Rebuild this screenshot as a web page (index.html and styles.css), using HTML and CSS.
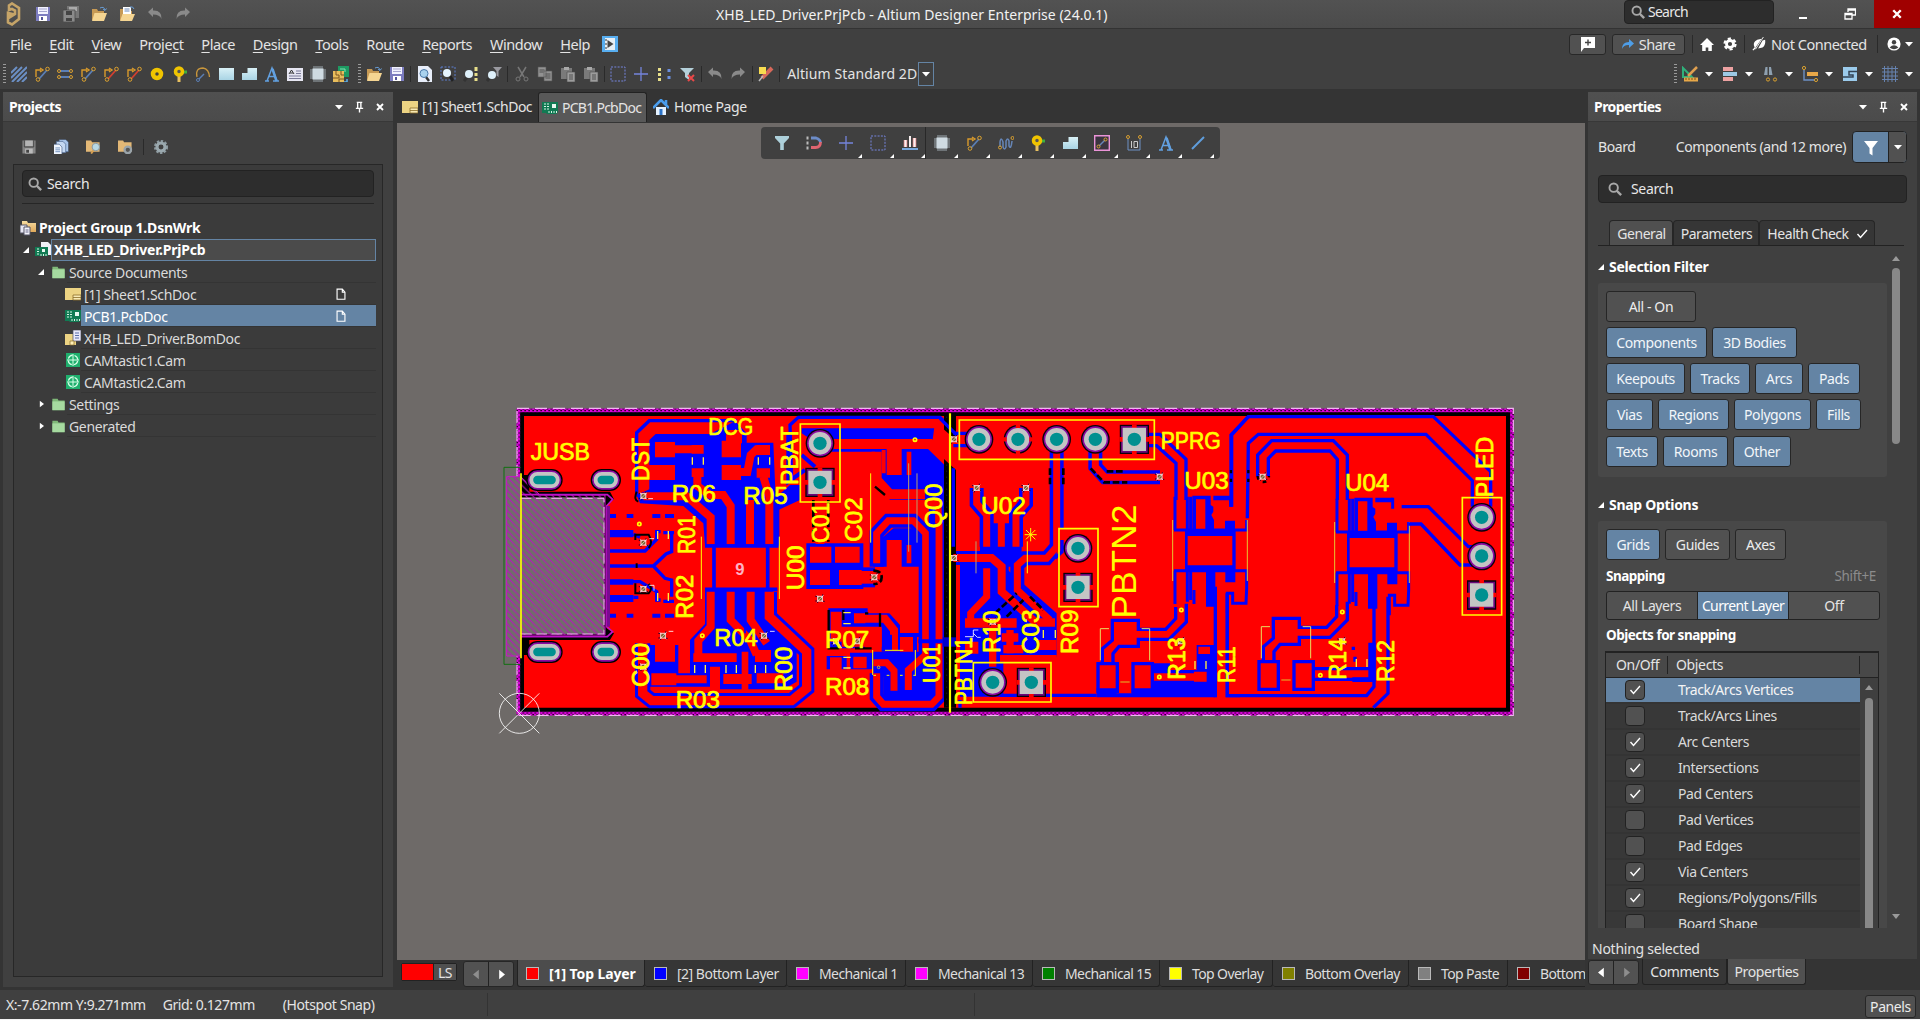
FILE: index.html
```html
<!DOCTYPE html>
<html lang="en">
<head>
<meta charset="utf-8">
<title>XHB_LED_Driver.PrjPcb - Altium Designer Enterprise (24.0.1)</title>
<link rel="stylesheet" href="styles.css">
</head>
<body>
<svg class="sprite" width="0" height="0">
<defs>
<pattern id="hatch" width="20" height="20" patternUnits="userSpaceOnUse"><path d="M-5-5L25 25M-5 15L5 25M15-5L25 5" stroke="#b416b8" stroke-width="3.5"/></pattern>
<pattern id="edge" width="12" height="12" patternUnits="userSpaceOnUse"><rect width="12" height="12" fill="#d800d8"/><path d="M1 3h6M7 8h5" stroke="#2a002a" stroke-width="3.500"/></pattern>
<linearGradient id="lb" x2="0" y2="1"><stop stop-color="#d8f0f6"/><stop offset="1" stop-color="#a9d4e4"/></linearGradient>
<linearGradient id="fo" x2="0" y2="1"><stop stop-color="#f6dca0"/><stop offset="1" stop-color="#e0a95a"/></linearGradient>
</defs>
<symbol id="i-logo" viewBox="0 0 18 24"><path d="M4 8V3.500L7 1.500L14 6v11l-7 5.500l-4-2v-4l7-4.500V8.500L7 7z M7 12l-4 2v-3z" fill="none" stroke="#c5a468" stroke-width="2.600"/></symbol>
<symbol id="i-save" viewBox="0 0 16 16"><path d="M1 1h14v14H1z" fill="#7c7cc0"/><path d="M3 1h10v7H3z" fill="#f2f2ff"/><path d="M4 3h8M4 5.500h8" stroke="#a5a5d0"/><path d="M4 10h8v5H4z" fill="#fff"/><path d="M6 11h2v3H6z" fill="#55559a"/></symbol>
<symbol id="i-saveg" viewBox="0 0 16 16"><path d="M1 1h14v14H1z" fill="#858585"/><path d="M4 1h8v6H4z" fill="#b4b4b4"/><path d="M4 9.500h8V15H4z" fill="#bbb"/><path d="M5 11h3v3H5z" fill="#444"/><path d="M3 1v7h10V1" fill="none" stroke="#444"/></symbol>
<symbol id="i-saveall" viewBox="0 0 16 16"><path d="M4 0h12v12H4z" fill="#777"/><path d="M6 1h8v4H6z" fill="#aaa"/><path d="M0 4h12v12H0z" fill="#8a8a8a" stroke="#444" stroke-width=".7"/><path d="M3 5h6v4H3zM3 12h6v3H3z" fill="#444"/></symbol>
<symbol id="i-open" viewBox="0 0 16 16"><path d="M1 3h5l1 2h6v9H1z" fill="#c79a55"/><path d="M3.500 7H16l-3 8H1z" fill="#f5d592"/><path d="M9 2q4-2 5 2m-2-1l2 1.500l1.500-2" fill="none" stroke="#6a9fd8"/></symbol>
<symbol id="i-openp" viewBox="0 0 16 16"><path d="M1 3h5l1 2h6v9H1z" fill="#c79a55"/><path d="M4 1h8v9H4z" fill="#fff"/><path d="M5.500 3h5M5.500 5h5" stroke="#6d8bbd"/><path d="M3.500 8H16l-3 7H1z" fill="#f5d592"/><path d="M11 1q3-1 4 2" fill="none" stroke="#6a9fd8"/></symbol>
<symbol id="i-undo" viewBox="0 0 16 16"><path d="M1 6l5-4.500V4.500q9-.5 8.500 8.500Q13 8.500 6 8.500V11z" fill="#8a8a8a"/></symbol>
<symbol id="i-redo" viewBox="0 0 16 16"><path d="M15 6l-5-4.500V4.500Q1 4 1.500 13Q3 8.500 10 8.500V11z" fill="#8a8a8a"/></symbol>
<symbol id="i-hatch" viewBox="0 0 16 16"><path d="M0 7L6 1M0 12L11 1M1 16L16 1M6 16L16 6M11 16l5-5" stroke="#6b8fc4" stroke-width="2"/></symbol>
<symbol id="i-route" viewBox="0 0 16 16"><path d="M2 11V4h5M6 2l3 2l-3 2" fill="none" stroke="#d99a2b" stroke-width="1.400"/><path d="M5 13l8-9" stroke="#5b7fb5" stroke-width="1.800"/><circle cx="4" cy="13.500" r="1.800" fill="none" stroke="#d9a030"/><circle cx="13.500" cy="3" r="1.800" fill="none" stroke="#d9a030"/></symbol>
<symbol id="i-router" viewBox="0 0 16 16"><path d="M2 11V4h5M6 2l3 2l-3 2" fill="none" stroke="#d99a2b" stroke-width="1.400"/><path d="M5 13l8-9" stroke="#d34030" stroke-width="1.800"/><circle cx="4" cy="13.500" r="1.800" fill="none" stroke="#d9a030"/><circle cx="13.500" cy="3" r="1.800" fill="none" stroke="#d9a030"/></symbol>
<symbol id="i-pair" viewBox="0 0 16 16"><path d="M3 5h10M3 11h10" stroke="#5b7fb5" stroke-width="2"/><g fill="none" stroke="#d9a030"><circle cx="2" cy="5" r="1.500"/><circle cx="14" cy="5" r="1.500"/><circle cx="2" cy="11" r="1.500"/><circle cx="14" cy="11" r="1.500"/></g></symbol>
<symbol id="i-pad" viewBox="0 0 16 16"><circle cx="8" cy="8" r="4" fill="none" stroke="#f0c400" stroke-width="4.500"/></symbol>
<symbol id="i-via" viewBox="0 0 16 16"><path d="M7 7v9" stroke="#e8c060" stroke-width="3"/><path d="M9 6h6" stroke="#3fae3f" stroke-width="3"/><circle cx="7" cy="5.500" r="3.500" fill="#555" stroke="#f0c400" stroke-width="3.500"/></symbol>
<symbol id="i-arc" viewBox="0 0 16 16"><path d="M2 11Q0 2 8 2q6 1 6.500 9" fill="none" stroke="#c8963c" stroke-width="1.300"/><path d="M4 13l5-5" stroke="#5b7fb5" stroke-width="1.500"/><circle cx="3" cy="14" r="1.500" fill="none" stroke="#5b7fb5"/></symbol>
<symbol id="i-rect" viewBox="0 0 16 16"><path d="M1 2h15v12H1z" fill="url(#lb)"/></symbol>
<symbol id="i-poly" viewBox="0 0 16 16"><path d="M6.500 2H16v12H1V7h5.500z" fill="url(#lb)"/></symbol>
<symbol id="i-A" viewBox="0 0 16 16"><path d="M1 15h4M9 15h6M3 15L8 2l5 13M5 10.500h6" fill="none" stroke="#62a0e0" stroke-width="1.500"/><path d="M8.500 3l4 12" stroke="#62a0e0" stroke-width="2.500"/></symbol>
<symbol id="i-note" viewBox="0 0 16 16"><path d="M0 2h16v13H0z" fill="#e6e6f2"/><path d="M9 5h5M9 7.500h5M2 10h12M2 12.500h12" stroke="#7a7a98"/><path d="M2 8l2.500-4L7 8M3 7h3" fill="none" stroke="#333"/></symbol>
<symbol id="i-chip" viewBox="0 0 16 16"><path d="M4 0v16M6 0v16M8 0v16M10 0v16M12 0v16M0 4h16M0 6h16M0 8h16M0 10h16M0 12h16" stroke="#a8b4bc" stroke-width=".9"/><path d="M2.500 2.500h11v11h-11z" fill="#cfdbe2"/></symbol>
<symbol id="i-room" viewBox="0 0 16 16"><path d="M5 0h11v11H5z" fill="#1e9a62"/><path d="M7 3h5v3" stroke="#7fe0b0" fill="none"/><path d="M0 5h11v11H0z" fill="#e8bd5c"/><path d="M3 5v4h3v3H0M8 5v4h3M6 16v-3h5" fill="none" stroke="#7a5520"/><path d="M14 13v3h-3" fill="none" stroke="#5ab0ee" stroke-width="1.500"/></symbol>
<symbol id="i-zdoc" viewBox="0 0 16 16"><path d="M1 0h10l4 4v12H1z" fill="#e8eefa"/><path d="M12 15L9 11" stroke="#333" stroke-width="2.500"/><circle cx="7" cy="7.500" r="4" fill="#a9d2ee" stroke="#4a78a8"/></symbol>
<symbol id="i-zsel" viewBox="0 0 16 16"><path d="M1 1h14v13H1z" fill="none" stroke="#5c7fd0" stroke-dasharray="2 1.500"/><path d="M13 15L10 10" stroke="#222" stroke-width="3"/><circle cx="7" cy="7" r="4" fill="#e4f4ff"/></symbol>
<symbol id="i-zpts" viewBox="0 0 16 16"><path d="M1 15l4-5" stroke="#333" stroke-width="3"/><circle cx="6" cy="8" r="4" fill="#def0fa"/><path d="M13 1v4M13 7v3M13 12v3" stroke="#e8df8a" stroke-width="3"/></symbol>
<symbol id="i-zflt" viewBox="0 0 16 16"><path d="M1 15l4-5" stroke="#333" stroke-width="3"/><circle cx="6" cy="9" r="4" fill="#def0fa"/><path d="M7 1h9l-3.500 4v6l-2-1.500V5z" fill="#9a9aa0"/></symbol>
<symbol id="i-cut" viewBox="0 0 16 16"><path d="M4 1l6 10M12 1L6 11" stroke="#777" stroke-width="1.500"/><circle cx="4" cy="13" r="2" fill="none" stroke="#777"/><circle cx="12" cy="13" r="2" fill="none" stroke="#777"/></symbol>
<symbol id="i-copy" viewBox="0 0 16 16"><path d="M1 1h8v10H1zM7 5h8v10H7z" fill="#929292" stroke="#555" stroke-width=".6"/><path d="M8.500 8h5M8.500 10h5M8.500 12h5M2.500 4h5M2.500 6h4" stroke="#505050"/></symbol>
<symbol id="i-paste" viewBox="0 0 16 16"><path d="M1 2h11v11H1z" fill="#7a7a7a"/><path d="M4 1h5v3H4z" fill="#aaa"/><path d="M7 6h8v10H7z" fill="#9c9c9c" stroke="#4a4a4a" stroke-width=".6"/><path d="M9 9h4M9 11h4M9 13h4" stroke="#505050"/></symbol>
<symbol id="i-sel" viewBox="0 0 16 16"><path d="M1 1h14v14H1z" fill="none" stroke="#7484dc" stroke-dasharray="2 1.300"/></symbol>
<symbol id="i-move" viewBox="0 0 16 16"><path d="M8 1v14M1 8h14" stroke="#7484dc" stroke-width="1.300"/></symbol>
<symbol id="i-dots" viewBox="0 0 16 16"><path d="M3.500 2v3M3.500 7v3M3.500 12v3" stroke="#e8df8a" stroke-width="3"/><path d="M13 3v3M13 10v3" stroke="#6b8fe0" stroke-width="3"/></symbol>
<symbol id="i-fltx" viewBox="0 0 16 16"><path d="M1 2h14L10 7v7l-4-3V7z" fill="#b4d0da"/><path d="M9 9l6 6M15 9l-6 6" stroke="#e84848" stroke-width="2"/></symbol>
<symbol id="i-wand" viewBox="0 0 16 16"><path d="M4 12L14 2" stroke="#d8685a" stroke-width="4"/><path d="M1 1h7v7H1z" fill="#f8dc50"/><path d="M1 15l4-5" stroke="#bbb" stroke-width="1.500"/></symbol>
<symbol id="i-flt" viewBox="0 0 16 16"><path d="M1 1h14v2L9.800 8.500V15H6.200V8.500L1 3z" fill="#add0da"/></symbol>
<symbol id="i-fltw" viewBox="0 0 16 16"><path d="M1 1h14L9.500 8v7.500l-3-2V8z" fill="#fff"/></symbol>
<symbol id="i-mag" viewBox="0 0 16 16"><path d="M5 3h5q4.500 1.500 4.500 5" fill="none" stroke="#6c8cc8" stroke-width="2.800"/><path d="M14.500 7q0 5.500-5 5.500H5" fill="none" stroke="#de6470" stroke-width="2.800"/><path d="M1.500 1.500v3M1.500 6.500v3M1.500 11.500v3" stroke="#bbb" stroke-width="2"/></symbol>
<symbol id="i-bars" viewBox="0 0 16 16"><path d="M3.500 12V5M12.500 12V3" stroke="#f08c8c" stroke-width="3.500"/><path d="M3.500 12V5M12.500 12V3M8 12V1" stroke="#f8f0f0" stroke-width="2"/><path d="M0 14h16" stroke="#77a7dd" stroke-width="2"/></symbol>
<symbol id="i-wave" viewBox="0 0 16 16"><path d="M2 12V7q1-6 3 0v5q1.500 4 3 0V6q2-4 3 0v5q2 4 3-5" fill="none" stroke="#6686b8" stroke-width="1.500"/><circle cx="2" cy="12.500" r="1.500" fill="none" stroke="#d9a030"/><circle cx="14.500" cy="3" r="1.500" fill="none" stroke="#d9a030"/></symbol>
<symbol id="i-ko" viewBox="0 0 16 16"><path d="M.7.7h14.600v14.600H.7z" fill="#3a3440" stroke="#eb94d8" stroke-width="1.400"/><path d="M5 11l6-6" stroke="#6686b8" stroke-width="1.500"/><circle cx="4.500" cy="11.500" r="1.500" fill="none" stroke="#d9a030"/><circle cx="11.500" cy="4.500" r="1.500" fill="none" stroke="#d9a030"/></symbol>
<symbol id="i-dim" viewBox="0 0 16 16"><path d="M2 4v11h12V4" fill="none" stroke="#6c90c4"/><path d="M5.500 6v7M8 6.500h3.500v6H8z" fill="none" stroke="#ccc"/><circle cx="2" cy="2" r="1.500" fill="none" stroke="#d9a030"/><circle cx="14" cy="2" r="1.500" fill="none" stroke="#d9a030"/></symbol>
<symbol id="i-line" viewBox="0 0 16 16"><path d="M2 14L14 2" stroke="#5f9ddc" stroke-width="2"/></symbol>
<symbol id="i-draw" viewBox="0 0 16 16"><path d="M1 2v9h9z" fill="none" stroke="#2fb07a" stroke-width="2"/><path d="M6 10l9-9" stroke="#e0a050" stroke-width="2.500"/><path d="M2 11.500h14v4H2z" fill="#e8a848"/><path d="M4 12v2M7 12v2M10 12v2M13 12v2" stroke="#7c5518"/></symbol>
<symbol id="i-align" viewBox="0 0 16 16"><path d="M1 1h10v4H1zM1 11h10v4H1z" fill="#eda2a2"/><path d="M1 6h14v4H1z" fill="#9cc8e4"/></symbol>
<symbol id="i-find" viewBox="0 0 16 16"><path d="M2 9l1.500-8h2V9zM7 9V1h2l1.500 8z" fill="#8ea0b0"/><circle cx="6" cy="13.500" r="1.600" fill="none" stroke="#d9a030"/><circle cx="13" cy="13.500" r="1.600" fill="none" stroke="#d9a030"/></symbol>
<symbol id="i-dims" viewBox="0 0 16 16"><path d="M2 4v10h11" fill="none" stroke="#6c90c4" stroke-width="1.400"/><path d="M5 6h11v4H5z" fill="#e8a848"/><circle cx="2" cy="2" r="1.600" fill="none" stroke="#d9a030"/><circle cx="14" cy="14" r="1.600" fill="none" stroke="#d9a030"/></symbol>
<symbol id="i-sheet" viewBox="0 0 16 16"><path d="M1 1h14v14H1z" fill="#9bcbec"/><path d="M15 5.500H7V9h4v2H1" fill="none" stroke="#345" stroke-width="1.500"/></symbol>
<symbol id="i-grid" viewBox="0 0 16 16"><path d="M2.500 0v16M6 0v16M10 0v16M13.500 0v16M0 2.500h16M0 6h16M0 10h16M0 13.500h16" stroke="#6682ae"/></symbol>
<symbol id="i-doc" viewBox="0 0 16 16"><path d="M0 2h16v12H0z" fill="#ecd383"/><path d="M8 9h8v5H8z" fill="#f9eab4" stroke="#8a6d28" stroke-width=".8"/><path d="M8 11.500h8" stroke="#8a6d28" stroke-width=".8"/></symbol>
<symbol id="i-pcb" viewBox="0 0 16 16"><path d="M0 2h16v10l-2 2H5l-1-1H0z" fill="#117a53"/><path d="M2 4h2M2 6.500h2M2 9h2M5 4h2M5 6.500h2M5 9h2M7 13v-2M9.500 13v-2M12 13v-2M14.500 13v-2" stroke="#d7f5e6"/><path d="M10 4h4v4h-4z" fill="#e8f8f0"/></symbol>
<symbol id="i-prj" viewBox="0 0 16 16"><path d="M6 0h7l3 3v10H6z" fill="#f0f0f6"/><path d="M0 5h13v9H0z" fill="#117a53"/><path d="M2 7h2M2 9.500h2M2 12h2M6 12v2M8.500 12v2M11 12v2" stroke="#d7f5e6"/><path d="M7 7h3v3H7z" fill="#e8f8f0"/></symbol>
<symbol id="i-grp" viewBox="0 0 16 16"><path d="M2 1h5l1 2h8v9H2z" fill="url(#fo)"/><path d="M0 5h7v8H0z" fill="#e8e8f4" stroke="#556"/><path d="M4 7h6v8H4z" fill="#f4f4fc" stroke="#556"/><path d="M5.500 10h3M5.500 12h3" stroke="#668"/></symbol>
<symbol id="i-bom" viewBox="0 0 16 16"><path d="M0 4h11v11H0z" fill="#ecd383"/><path d="M8 0h8v11H8z" fill="#e8e8fa" stroke="#556" stroke-width=".7"/><path d="M10 3h4M10 5.500h4M10 8h4" stroke="#5a6da8"/><path d="M5 11h4v4H5z" fill="#fff0b8" stroke="#8a6d28" stroke-width=".7"/></symbol>
<symbol id="i-cam" viewBox="0 0 16 16"><path d="M1 1h14v14H1z" fill="#1faf6d"/><circle cx="8" cy="8" r="4.800" fill="none" stroke="#d8ffe8" stroke-width="1.200" stroke-dasharray="5.500 2.040" stroke-dashoffset="-1"/><path d="M8 2v12M2 8h12" stroke="#d8ffe8"/></symbol>
<symbol id="i-fold" viewBox="0 0 16 16"><path d="M1 2h6l1 2h7v11H1z" fill="#7fb878"/><path d="M1 5h14v10H1z" fill="#a6daa0"/></symbol>
<symbol id="i-file" viewBox="0 0 16 16"><path d="M3.500 2.500h6l3 3.500v8h-9zM9.500 2.500V6h3" fill="none" stroke="#fff" stroke-width="1.300"/></symbol>
<symbol id="i-fsearch" viewBox="0 0 16 16"><path d="M0 1h6l1 2h8v10H0z" fill="#e3b876"/><path d="M6 15l3-4" stroke="#d8a050" stroke-width="2"/><circle cx="11" cy="8" r="4" fill="#b8d8e4" stroke="#8796a0"/></symbol>
<symbol id="i-fgear" viewBox="0 0 16 16"><path d="M0 1h6l1 2h8v10H0z" fill="#e3b876"/><circle cx="11" cy="11" r="3.500" fill="#555" stroke="#9aa4aa" stroke-width="2.400"/></symbol>
<symbol id="i-docs" viewBox="0 0 16 16"><path d="M6 0h7l3 3v10H6z" fill="#a8c4e8" stroke="#46608a" stroke-width=".7"/><path d="M3 2h7l3 3v9H3z" fill="#c4d8f2" stroke="#46608a" stroke-width=".7"/><path d="M0 5h6l3 3v8H0z" fill="#f0f6ff" stroke="#46608a" stroke-width=".7"/><path d="M2 9h5M2 11h5M2 13h5" stroke="#6f8fbd"/></symbol>
<symbol id="i-gear" viewBox="0 0 16 16"><circle cx="8" cy="8" r="6.300" fill="none" stroke="#8d9aa0" stroke-width="2.500" stroke-dasharray="2.500 1.600"/><circle cx="8" cy="8" r="4.300" fill="none" stroke="#9aa8ae" stroke-width="3.300"/></symbol>
<symbol id="i-gearw" viewBox="0 0 16 16"><circle cx="8" cy="8" r="6.300" fill="none" stroke="#fff" stroke-width="2.500" stroke-dasharray="3.600 3"/><circle cx="8" cy="8" r="4" fill="none" stroke="#fff" stroke-width="3.200"/></symbol>
<symbol id="i-search" viewBox="0 0 16 16"><circle cx="6.500" cy="6.500" r="4.800" fill="none" stroke="#a8a8a8" stroke-width="2.200"/><path d="M10 10l5 5" stroke="#a8a8a8" stroke-width="2.800"/></symbol>
<symbol id="i-home" viewBox="0 0 16 16"><path d="M3 8v8h10V8z" fill="#e6f2ff"/><path d="M0 9l8-8l8 8M13 1v5" fill="none" stroke="#4a9cec" stroke-width="2.600"/><path d="M6.500 10h3v6h-3z" fill="#2c74c8"/></symbol>
<symbol id="i-homew" viewBox="0 0 16 16"><path d="M8 1l8 8h-2.500v7h-4v-4h-3v4h-4V9H0z" fill="#fff"/></symbol>
<symbol id="i-dn" viewBox="0 0 8 8"><path d="M0 2h8L4 6.500z" fill="#fff"/></symbol>
<symbol id="i-pin" viewBox="0 0 12 12"><path d="M3 1h6M4 1v6M7.500 1v6M2 7.500h8M6 7.500V12" stroke="#fff" stroke-width="1.500" fill="none"/></symbol>
<symbol id="i-x" viewBox="0 0 8 8"><path d="M1 1l6 6M7 1L1 7" stroke="#fff" stroke-width="1.900"/></symbol>
<symbol id="i-user" viewBox="0 0 16 16"><circle cx="8" cy="8" r="7.500" fill="#fff"/><circle cx="8" cy="6" r="2.500" fill="#404040"/><path d="M3 12q5-5 10 0q-5 4-10 0" fill="#404040"/></symbol>
<symbol id="i-plug" viewBox="0 0 16 16"><path d="M1 15l3-3" stroke="#fff" stroke-width="1.500"/><path d="M3 12Q0 6 6 3l5-1l-7 10zM12 4l3-1q1 6-3 9l-5 1z" fill="#fff"/><path d="M13 0L4 14" stroke="#fff" stroke-width="1"/></symbol>
<symbol id="i-play" viewBox="0 0 16 16"><path d="M0 0h16v16H0z" fill="#58aef0"/><path d="M3 2h10v12H3z" fill="#e6eef4"/><path d="M5.500 4l6 4l-6 4z" fill="#444"/><path d="M3 4h2M3 8h2M3 12h2" stroke="#333"/></symbol>
<symbol id="i-cmt" viewBox="0 0 16 16"><path d="M1 1h14v11H4l-3 4z" fill="#fff"/><path d="M8 3.500v6M5 6.500h6" stroke="#444" stroke-width="1.400"/></symbol>
<symbol id="i-share" viewBox="0 0 12 12"><path d="M7 1l5 4.500L7 10V7Q2 6.500 0 11Q0 4 7 4z" fill="#4e9ee8"/></symbol>
<symbol id="i-chk" viewBox="0 0 12 12"><path d="M1.500 6l3 3.500L11 2" fill="none" stroke="#fff" stroke-width="1.400"/></symbol>
<symbol id="i-exp" viewBox="0 0 6 6"><path d="M6 0v6H0z" fill="#fff"/></symbol>
<symbol id="i-col" viewBox="0 0 6 8"><path d="M1 0l5 4l-5 4z" fill="#fff"/></symbol>

<symbol id="p-via" viewBox="0 0 30 30"><path d="M1 8h6M1 22h6M23 2v5M24 23h5M8 28v-4" stroke="#200030" stroke-width="3"/><path d="M6 6h18v18H6z" fill="#f0b8b8"/><circle cx="15" cy="15" r="6" fill="#75602c"/><path d="M5 25L26 5M5 5l4 4M21 21l4 4" stroke="#f4f4f4" stroke-width="2"/></symbol>
<symbol id="p-rnd" viewBox="0 0 90 90"><circle cx="45" cy="45" r="43" fill="#0a000a"/><circle cx="45" cy="45" r="39" fill="#8a0aa0"/><circle cx="45" cy="45" r="34" fill="#c4c4c4"/><circle cx="45" cy="45" r="20" fill="#009090"/></symbol>
<symbol id="p-sq" viewBox="0 0 90 90"><path d="M1 1h88v88H1z" fill="#0a000a"/><path d="M5 5h80v80H5z" fill="#6a0878"/><path d="M0 38h90v14H0zM38 0h14v90H38z" fill="#f00"/><path d="M10 10h70v70H10z" fill="#c4c4c4"/><circle cx="45" cy="45" r="20" fill="#009090"/></symbol>
</svg>

<div class="app">
 <header class="title">
  <div class="quick"><svg class="logo"><use href="#i-logo"/></svg><svg><use href="#i-save"/></svg><svg><use href="#i-saveall"/></svg><svg><use href="#i-open"/></svg><svg><use href="#i-openp"/></svg><svg><use href="#i-undo"/></svg><svg><use href="#i-redo"/></svg></div>
  <div class="caption">XHB_LED_Driver.PrjPcb - Altium Designer Enterprise (24.0.1)</div>
  <div class="winctl"><div class="field tsearch"><svg><use href="#i-search"/></svg>Search</div><span class="min"></span><svg class="restore" viewBox="0 0 12 12"><path d="M4 4V1h7.500v6H8M4 2h7M1 5.500h7V11H1zM1 6.500h7" fill="none" stroke="#fff" stroke-width="1.300"/></svg><div class="close"><svg><use href="#i-x"/></svg></div></div>
 </header>
 <nav class="menu">
  <div class="items"><span><u>F</u>ile</span><span><u>E</u>dit</span><span><u>V</u>iew</span><span>Proje<u>c</u>t</span><span><u>P</u>lace</span><span><u>D</u>esign</span><span><u>T</u>ools</span><span>Ro<u>u</u>te</span><span><u>R</u>eports</span><span><u>W</u>indow</span><span><u>H</u>elp</span></div>
  <svg class="play"><use href="#i-play"/></svg>
  <div class="acct"><div class="btn cmt"><svg><use href="#i-cmt"/></svg></div><div class="btn share"><svg><use href="#i-share"/></svg>Share</div><i class="sep"></i><svg><use href="#i-homew"/></svg><svg><use href="#i-gearw"/></svg><i class="sep"></i><svg><use href="#i-plug"/></svg><span class="nc">Not Connected</span><i class="sep"></i><svg class="user"><use href="#i-user"/></svg><svg class="dn"><use href="#i-dn"/></svg></div>
 </nav>
 <div class="tools">
  <i class="grip"></i>
  <svg><use href="#i-hatch"/></svg><svg><use href="#i-route"/></svg><svg><use href="#i-pair"/></svg><svg><use href="#i-route"/></svg><svg><use href="#i-router"/></svg><svg><use href="#i-router"/></svg><svg><use href="#i-pad"/></svg><svg><use href="#i-via"/></svg><svg><use href="#i-arc"/></svg><svg><use href="#i-rect"/></svg><svg><use href="#i-poly"/></svg><svg><use href="#i-A"/></svg><svg><use href="#i-note"/></svg><svg><use href="#i-chip"/></svg><svg><use href="#i-room"/></svg>
  <i class="grip g2"></i>
  <svg><use href="#i-open"/></svg><svg><use href="#i-save"/></svg><i class="sep"></i><svg><use href="#i-zdoc"/></svg><svg><use href="#i-zsel"/></svg><svg><use href="#i-zpts"/></svg><svg><use href="#i-zflt"/></svg><i class="sep"></i><svg><use href="#i-cut"/></svg><svg><use href="#i-copy"/></svg><svg><use href="#i-paste"/></svg><svg><use href="#i-paste"/></svg><i class="sep"></i><svg><use href="#i-sel"/></svg><svg><use href="#i-move"/></svg><svg><use href="#i-dots"/></svg><svg><use href="#i-fltx"/></svg><i class="sep"></i><svg><use href="#i-undo"/></svg><svg><use href="#i-redo"/></svg><i class="sep"></i><svg><use href="#i-wand"/></svg><i class="sep"></i>
  <span class="view">Altium Standard 2D</span><div class="drop"><svg class="dn"><use href="#i-dn"/></svg></div>
  <div class="rtools"><i class="grip"></i><div><svg><use href="#i-draw"/></svg><svg class="dn"><use href="#i-dn"/></svg></div><div><svg><use href="#i-align"/></svg><svg class="dn"><use href="#i-dn"/></svg></div><div><svg><use href="#i-find"/></svg><svg class="dn"><use href="#i-dn"/></svg></div><div><svg><use href="#i-dims"/></svg><svg class="dn"><use href="#i-dn"/></svg></div><div><svg><use href="#i-sheet"/></svg><svg class="dn"><use href="#i-dn"/></svg></div><div><svg><use href="#i-grid"/></svg><svg class="dn"><use href="#i-dn"/></svg></div></div>
 </div>
 <main class="work">
  <aside class="panel left">
   <div class="phead"><b>Projects</b><svg><use href="#i-dn"/></svg><svg class="pin"><use href="#i-pin"/></svg><svg><use href="#i-x"/></svg></div>
   <div class="ptools"><svg><use href="#i-saveg"/></svg><svg><use href="#i-docs"/></svg><svg><use href="#i-fsearch"/></svg><svg><use href="#i-fgear"/></svg><i class="sep"></i><svg><use href="#i-gear"/></svg></div>
   <div class="tree">
    <div class="field"><svg><use href="#i-search"/></svg>Search</div>
    <hr>
    <div class="row l0"><svg><use href="#i-grp"/></svg><b>Project Group 1.DsnWrk</b></div>
    <div class="row l1"><svg class="ar"><use href="#i-exp"/></svg><svg><use href="#i-prj"/></svg><b class="cur">XHB_LED_Driver.PrjPcb</b></div>
    <div class="row l2"><svg class="ar"><use href="#i-exp"/></svg><svg class="f"><use href="#i-fold"/></svg><span>Source Documents</span></div>
    <div class="row l3"><svg><use href="#i-doc"/></svg><span>[1] Sheet1.SchDoc</span><svg class="fl"><use href="#i-file"/></svg></div>
    <div class="row l3 on"><svg><use href="#i-pcb"/></svg><span>PCB1.PcbDoc</span><svg class="fl"><use href="#i-file"/></svg></div>
    <div class="row l3"><svg><use href="#i-bom"/></svg><span>XHB_LED_Driver.BomDoc</span></div>
    <div class="row l3"><svg><use href="#i-cam"/></svg><span>CAMtastic1.Cam</span></div>
    <div class="row l3"><svg><use href="#i-cam"/></svg><span>CAMtastic2.Cam</span></div>
    <div class="row l2"><svg class="ar c"><use href="#i-col"/></svg><svg class="f"><use href="#i-fold"/></svg><span>Settings</span></div>
    <div class="row l2"><svg class="ar c"><use href="#i-col"/></svg><svg class="f"><use href="#i-fold"/></svg><span>Generated</span></div>
   </div>
  </aside>
  <section class="center">
   <div class="dtabs"><div class="t1"><svg><use href="#i-doc"/></svg>[1] Sheet1.SchDoc</div><div class="t2"><svg><use href="#i-pcb"/></svg>PCB1.PcbDoc</div><div class="t3"><svg><use href="#i-home"/></svg>Home Page</div></div>
   <div class="canvas">
    <svg class="board" viewBox="397 123 1188 837">
     <g transform="translate(490 400) scale(.33333)" fill="none">
      <!-- board body and edge -->
      <path d="M85 31H3066V941H85z" fill="#000" stroke="url(#edge)" stroke-width="11"/>
      <path d="M81 25H3070V946H81z" stroke="#efb6ef" stroke-width="3.500" stroke-dasharray="36 18"/>
      <path d="M102 48H3048V923H102z" fill="#f00"/>
      <!-- power and charger block -->
      <path d="M440 290V98L478 62H740" stroke="#00f" stroke-width="10"/>
      <path d="M478 120L497 102H660L735 64L770 100V128H850L856 270L868 310V437H645L640 370L580 318L450 310L440 285L478 268z" fill="#00f"/>
      <g fill="#f00"><path d="M495 126h60v46h-60zM470 195h85v45h-85zM605 135h36v26h-36zM605 205h36v26h-36zM695 122h58v50h-58zM695 195h58v45h-58zM800 135h40v30h-40zM800 205h40v28h-40zM708 90h48v40h-48z"/></g>
      <g stroke="#f00" stroke-width="24"><path d="M555 148H610M460 289H590L662 352V433M622 230V258L660 285H700L722 318V433M753 216H772L782 165L800 148H840M780 300V433M820 230L838 290V433"/></g>
      <path d="M640 438H872V570H640z" fill="#f00"/>
      <path d="M645 438H866M645 568H862M672 438V568M833 438V568" stroke="#00f" stroke-width="11"/>
      <path d="M838 575V650L950 755V865L905 902H485L458 880V730" stroke="#00f" stroke-width="46"/>
      <path d="M645 572H850V655L920 735V845L880 868H690V860H480V735H565V820H600V720L645 672z" fill="#00f"/>
      <g fill="#f00"><path d="M678 450h148v108H678zM495 735h60v50h-60zM484 820h75v36h-75zM610 760h130v26H610zM660 800h30v72h-30zM700 822h85v30h-85zM755 755h20v115h-20zM795 750h48v36h-48zM800 820h80v30h-80zM570 740h26v75h-26z"/></g>
      <g stroke="#f00" stroke-width="24"><path d="M838 575V650L950 755V865L905 902H485L458 880V730" stroke-width="28"/><path d="M662 575V680L625 722V770M722 575V660L780 720L800 765M782 575V660L830 730M555 838H650"/></g>
      <path d="M755 575V640M765 610V700" stroke="#00f" stroke-width="5"/>
      <!-- USB fingers -->
      <g fill="#00f"><path d="M360 342h18v12h-18zM410 342h20v12h-20zM487 342h24v12h-24zM525 342h27v12h-27zM360 390h70v22h-70zM360 538h70v16h-70zM360 585h70v21h-70zM360 641h18v12h-18zM410 641h20v12h-20zM487 641h24v12h-24zM525 641h27v12h-27z"/></g>
      <path d="M430 403L450 412M360 453H465L500 418V395H512M520 398H552M545 395V455L528 462L490 498H360M490 498L525 535L545 540V590M360 545H450L500 575V600H512M430 592H445M520 604H552" stroke="#00f" stroke-width="10"/>
      <path d="M440 275q-10 25 5 30M436 420v-16h40q14 24 0 40M436 550v30h40q14-15 0-28M440 490v14" stroke="#000" stroke-width="6"/>
      <!-- battery input -->
      <g transform="translate(750)">
       <path d="M155 240L150 75L175 52H600L640 90" stroke="#00f" stroke-width="10"/>
       <path d="M185 85H600L640 120H612V372H605V300L450 300L405 250V155H270L185 100zM110 290L150 255H180V300L115 330z" fill="#00f"/>
       <path d="M280 132H570L640 200M410 155V240L450 283H555" stroke="#f00" stroke-width="30"/>
       <path d="M185 165L225 200M145 105V245L195 210" stroke="#00f" stroke-width="12"/>
       <g fill="#f00"><path d="M440 140h45v85h-45zM500 155h14v70h-14zM425 150h12v70h-12z"/></g>
       <path d="M410 500V400L445 362H520L557 400V765L505 810V870M410 820V890L430 913H575L597 890V370" stroke="#00f" stroke-width="42"/>
       <path d="M400 755H585V900H430V830H400zM430 410L460 385H520L540 410V500H400V440zM535 755H590V900z" fill="#00f"/>
       <path d="M410 490V400L445 362H520L557 400V765L505 810V870M410 820V890L430 913H575L597 890V370M380 788H440L462 812V872" stroke="#f00" stroke-width="21"/>
       <path d="M440 420h45v88h-45zM500 435h14v55h-14z" fill="#f00"/>
       <path d="M576 320V755" stroke="#00f" stroke-width="19"/>
       <path d="M199 430H370V567H199z" fill="#00f"/>
       <path d="M210 440h64v48h-64zM285 440h74v48h-74zM210 510h60v45h-60zM297 510h70v45h-70z" fill="#f00"/>
       <path d="M240 288V432" stroke="#f00" stroke-width="26"/>
       <path d="M365 532H405" stroke="#00f" stroke-width="60"/><path d="M350 532H405" stroke="#f00" stroke-width="38"/>
       <path d="M400 512q25 0 25 20t-25 20M220 300V425M265 300V425" stroke="#000" stroke-width="8" stroke-dasharray="22 8"/>
       <path d="M265 625h118v15h65l32 35v80h-55v-70h-50v60H265zM260 768h60v40h-60zM330 758h70v50h-70z" fill="#00f"/>
       <path d="M272 635h33v90h-33zM342 640h34v30h-34zM270 772h35v38h-35zM340 770h40v35h-40zM330 690h50v45h-50zM305 680h120v60H305z" fill="#f00"/>
       <path d="M370 656H435L462 690V750" stroke="#f00" stroke-width="24"/>
       <path d="M480 705h60M430 710h20v40M525 710v45M535 724h80" stroke="#00f" stroke-width="12"/>
       <path d="M266 630v115h32M345 745h50M310 630v30M405 260l30 25M375 640h10M420 640v40" stroke="#000" stroke-width="7"/>
       <path d="M612 48H648V923H612z" fill="#000"/><path d="M620 50V920" stroke="#333" stroke-width="2" stroke-dasharray="3 15"/>
       <path d="M585 65L648 120V210L575 143z" fill="#f00"/><path d="M600 55L650 105M640 205V440" stroke="#00f" stroke-width="10"/>
       <path d="M608 712h40v28h-40z" fill="#00c"/>
      </g>
      <!-- programmer header and U02 -->
      <g transform="translate(1350)">
       <path d="M40 100H90M40 137H90M620 103H660L738 178V300M620 137H650L708 190V300" stroke="#00f" stroke-width="10"/>
       <path d="M60 490H180L260 560L350 640V770H190V890H60z" fill="#00f"/>
       <path d="M48 474H155L185 500V575L270 650M110 264V310L140 345V440M258 264V310L228 345V440M350 155V440L320 475H255L232 495V570L330 660M466 155V200L495 232H660" stroke="#00f" stroke-width="42"/>
       <path d="M120 370H245V500H120z" fill="#00f"/>
       <path d="M110 264V310L140 345V440M258 264V310L228 345V440M184 350V440M350 155V440L320 475H255L232 495V570L330 660M140 505V590L92 640V670M466 155V200L495 232H660" stroke="#f00" stroke-width="21"/>
       <path d="M40 474H155L185 500V575L290 670" stroke="#f00" stroke-width="24"/>
       <path d="M75 655h155v28H75zM290 655h55v25h-55zM75 725h40v36H75zM185 700h50v25h-50zM190 735h60v25h-60zM290 720h60v30h-60zM180 765h170v20H180z" fill="#f00"/>
       <path d="M158 680V800M210 690V760" stroke="#f00" stroke-width="22"/>
       <path d="M165 640L230 580M200 650L250 600M330 205v50M370 205v50M452 205l40 42h70M500 214h50M270 590l40 40" stroke="#000" stroke-width="8" stroke-dasharray="20 8"/>
       <path d="M180 886H470M60 900V923M862 580V887H900" stroke="#00f" stroke-width="10"/>
       <path d="M350 385H480V620H350z" fill="#f00"/><path d="M366 420V455L345 475M366 450L380 435" stroke="#00f" stroke-width="10"/>
       <path d="M470 865H640V790H690V810H770V735H825V892H470z" fill="#00f"/>
       <path d="M530 785h45v95h-45zM605 820h195v22H605zM775 740h35v22h-35zM762 815h38v30h-38z" fill="#f00"/>
       <path d="M875 320V105L925 50" stroke="#00f" stroke-width="10"/>
       <path d="M826 560V892" stroke="#00f" stroke-width="10"/>
      </g>
      <!-- LED driver channels -->
      <defs>
       <g id="drv"><path d="M705 290V390M742 290V390M752 290V395M702 390H920V360M702 512H920V565L918 610H878V580H862V640M705 512V612M742 512V605M752 512V600M762 570V612M872 287V320" stroke="#00f" stroke-width="9"/>
        <path d="M757 287h55v28l8 5v15l-6 10l8 15v30H757zM820 287h52v14h-52zM855 362h30v38h-30zM735 392h152v118H735zM798 515h28v105h-28zM856 515h30v32h-30z" fill="#00f"/>
        <path d="M768 298h28v88h-28zM743 408h134v88H743z" fill="#f00"/>
        <path d="M698 360V543M922 360V543" stroke="#e8c830" stroke-width="3"/></g>
       <g id="fet"><path d="M350 615V650L320 682H238V655H160V715L130 740V785M382 605V660L330 712H238V733H180L162 755V785M117 785H175V868H117zM222 785H280V868H222z" stroke="#00f" stroke-width="10"/><path d="M124 775V680H150M272 775V680H248" stroke="#e8e060" stroke-width="3"/><path d="M184 840H212" stroke="#e89020" stroke-width="4"/></g>
      </defs>
      <use href="#drv" x="1350"/><use href="#drv" x="1836" y="6"/>
      <use href="#fet" x="1707" y="6"/><use href="#fet" x="2190"/>
      <g transform="translate(2190)">
       <path d="M33 320V105L85 50H640L812 215V320M82 355L85 130L115 103H618L757 242V320M113 230V165L155 122H340L382 165V300M145 228V175L167 153H330L352 178V300M545 320H625L745 440H765M565 372H603L720 495H760M22 580V887H440L462 860V620M504 590V880L460 923M280 806H450M280 838H450M395 745h10M405 770v15" stroke="#00f" stroke-width="10"/>
       <path d="M445 728h22v118h-70v-14h48zM742 605h30v25h-30z" fill="#00f"/>
       <path d="M33 210v40M85 210v40M113 228q0 18 17 18t17-18" stroke="#000" stroke-width="7" stroke-dasharray="10 16"/>
      </g>
      <!-- connector cutout -->
      <path d="M92 225H118V275H360L372 298L350 315V685L372 700L360 720H118V765H92z" fill="#000"/>
      <path d="M50 230H92V292H342V702H92V768H50z" fill="#716d6b"/>
      <path d="M50 230H92L150 285H345V705H92V768H50z" fill="url(#hatch)" stroke="#c818c8" stroke-width="3"/>
      <path d="M92 284H352L368 298L350 318V680L368 695L352 710H92" stroke="#c010c8" stroke-width="5"/>
      <path d="M355 318V680" stroke="#7a0a90" stroke-width="10"/>
      <path d="M92 295H342V702H92" stroke="#efb6ef" stroke-width="3" stroke-dasharray="32 14"/>
      <path d="M92 202H42V793H92" stroke="#107010" stroke-width="3"/>
      <path d="M93 220V775" stroke="#ff0" stroke-width="5"/>
      <g stroke-linecap="round"><path d="M142 240H185M335 240H360M142 756H185M335 756H360" stroke="#000" stroke-width="66"/><path d="M142 240H185M335 240H360M142 756H185M335 756H360" stroke="#8a0aa0" stroke-width="58"/><path d="M142 240H185M335 240H360M142 756H185M335 756H360" stroke="#c4c4c4" stroke-width="48"/></g>
      <path d="M142 240H185M335 240H360M142 756H185M335 756H360" stroke="#009090" stroke-width="25" stroke-linecap="round"/>
      <!-- through-hole pads -->
      <use href="#p-rnd" x="945" y="85" width="90" height="90"/><use href="#p-sq" x="945" y="202" width="90" height="90"/>
      <use href="#p-rnd" x="1422" y="73" width="90" height="90"/><use href="#p-rnd" x="1539" y="73" width="90" height="90"/><use href="#p-rnd" x="1655" y="73" width="90" height="90"/><use href="#p-rnd" x="1771" y="73" width="90" height="90"/><use href="#p-sq" x="1888" y="73" width="90" height="90"/>
      <path d="M1537 118h13M1618 118h13M1584 71v13M1584 152v12" stroke="#f00" stroke-width="13"/>
      <use href="#p-rnd" x="1719" y="400" width="90" height="90"/><use href="#p-sq" x="1719" y="517" width="90" height="90"/>
      <use href="#p-rnd" x="1463" y="802" width="90" height="90"/><use href="#p-sq" x="1579" y="802" width="90" height="90"/>
      <use href="#p-rnd" x="2930" y="307" width="90" height="90"/><use href="#p-rnd" x="2930" y="423" width="90" height="90"/><use href="#p-sq" x="2930" y="540" width="90" height="90"/>
      <!-- vias -->
      <g><use href="#p-via" x="445" y="273" width="30" height="30"/><use href="#p-via" x="445" y="413" width="30" height="30"/><use href="#p-via" x="445" y="552" width="30" height="30"/><use href="#p-via" x="504" y="692" width="30" height="30"/><use href="#p-via" x="445" y="785" width="30" height="30"/><use href="#p-via" x="807" y="692" width="30" height="30"/><use href="#p-via" x="1138" y="517" width="30" height="30"/><use href="#p-via" x="975" y="581" width="30" height="30"/><use href="#p-via" x="1023" y="709" width="30" height="30"/><use href="#p-via" x="1086" y="709" width="30" height="30"/><use href="#p-via" x="1377" y="103" width="30" height="30"/><use href="#p-via" x="1377" y="459" width="30" height="30"/><use href="#p-via" x="1445" y="249" width="30" height="30"/><use href="#p-via" x="1593" y="249" width="30" height="30"/><use href="#p-via" x="1493" y="650" width="30" height="30"/><use href="#p-via" x="1994" y="215" width="30" height="30"/><use href="#p-via" x="2058" y="709" width="30" height="30"/><use href="#p-via" x="2303" y="215" width="30" height="30"/><use href="#p-via" x="2541" y="709" width="30" height="30"/></g>
      <!-- overlay outlines -->
      <g stroke="#ff0" stroke-width="5"><path d="M931 72h119v234H931zM1408 60h585v118h-585zM1707 386h117v234h-117zM1450 788h233v118h-233zM2917 293h118v352h-118z"/><path d="M1380 40V938" stroke-width="6.500"/>
       <path d="M607 172v22M640 172v22M805 172v22M839 172v22M503 393v24M535 393v24M503 579v24M535 579v24M614 795v24M646 795v24M708 795v24M739 795v24M796 795v24M827 795v24M1060 638h22M1060 671h22M1060 772h22M1060 804h22M1660 690v24M1696 690v24M2115 783v24M2148 783v24M2599 777v24M2631 777v24" stroke="#ffee40" stroke-width="4"/>
       <path d="M634 410V597M868 410V597M1142 220V428M1612 424V520M1148 750V825M1276 750V825M1185 751H1240M1150 826h8M1190 826h8M1230 826h8M1270 826h8" stroke-width="3"/>
       <path d="M1256 190V455M1281 220V428M1458 424V520" stroke="#b8a070" stroke-width="3"/>
       <path d="M1622 384V424M1604 404H1640M1608 390L1636 418M1636 390L1608 418" stroke-width="3"/>
       <circle cx="448" cy="372" r="5"/><circle cx="637" cy="707" r="5"/><circle cx="1275" cy="119" r="5"/><circle cx="1166" cy="802" r="4" stroke-width="2"/><circle cx="2074" cy="630" r="5"/><circle cx="2008" cy="831" r="5"/><circle cx="2557" cy="636" r="5"/><circle cx="2491" cy="826" r="5"/>
      </g>
      <path d="M1425 710h25v-20h15M1450 700l12 12h10M475 296h14M478 416h14M478 556h14v16M536 694h14M840 694h14" stroke="#fff" stroke-width="2.500"/>
      <!-- designators -->
      <g class="des">
       <text x="122" y="181" textLength="178" lengthAdjust="spacingAndGlyphs">JUSB</text><text x="655" y="105" textLength="135" lengthAdjust="spacingAndGlyphs">DCG</text><text x="545" y="307" textLength="133" lengthAdjust="spacingAndGlyphs">R06</text><text x="760" y="313" textLength="133" lengthAdjust="spacingAndGlyphs">R05</text><text x="673" y="738" textLength="130" lengthAdjust="spacingAndGlyphs">R04</text><text x="557" y="925" textLength="133" lengthAdjust="spacingAndGlyphs">R03</text><text x="1005" y="743" textLength="133" lengthAdjust="spacingAndGlyphs">R07</text><text x="1005" y="884" textLength="133" lengthAdjust="spacingAndGlyphs">R08</text><text x="1473" y="342" textLength="135" lengthAdjust="spacingAndGlyphs">U02</text><text x="2012" y="146" textLength="180" lengthAdjust="spacingAndGlyphs">PPRG</text><text x="2083" y="268" textLength="133" lengthAdjust="spacingAndGlyphs">U03</text><text x="2565" y="274" textLength="133" lengthAdjust="spacingAndGlyphs">U04</text>
       <text transform="translate(476 243) rotate(-90)" textLength="130" lengthAdjust="spacingAndGlyphs">DST</text><text transform="translate(615 462) rotate(-90)" textLength="116" lengthAdjust="spacingAndGlyphs">R01</text><text transform="translate(610 656) rotate(-90)" textLength="132" lengthAdjust="spacingAndGlyphs">R02</text><text transform="translate(476 861) rotate(-90)" textLength="132" lengthAdjust="spacingAndGlyphs">C00</text><text transform="translate(925 255) rotate(-90)" textLength="176" lengthAdjust="spacingAndGlyphs">PBAT</text><text transform="translate(1017 429) rotate(-90)" textLength="122" lengthAdjust="spacingAndGlyphs">C01</text><text transform="translate(1116 425) rotate(-90)" textLength="133" lengthAdjust="spacingAndGlyphs">C02</text><text transform="translate(1355 385) rotate(-90)" textLength="134" lengthAdjust="spacingAndGlyphs">Q00</text><text transform="translate(942 571) rotate(-90)" textLength="135" lengthAdjust="spacingAndGlyphs">U00</text><text transform="translate(907 874) rotate(-90)" textLength="134" lengthAdjust="spacingAndGlyphs">R00</text><text transform="translate(1350 849) rotate(-90)" textLength="118" lengthAdjust="spacingAndGlyphs">U01</text><text transform="translate(1447 916) rotate(-90)" textLength="205" lengthAdjust="spacingAndGlyphs">PBTN1</text><text transform="translate(1531 759) rotate(-90)" textLength="127" lengthAdjust="spacingAndGlyphs">R10</text><text transform="translate(1648 762) rotate(-90)" textLength="134" lengthAdjust="spacingAndGlyphs">C03</text><text transform="translate(1763 762) rotate(-90)" textLength="134" lengthAdjust="spacingAndGlyphs">R09</text><text transform="translate(2085 839) rotate(-90)" textLength="127" lengthAdjust="spacingAndGlyphs">R13</text><text transform="translate(2235 849) rotate(-90)" textLength="110" lengthAdjust="spacingAndGlyphs">R11</text><text transform="translate(2568 839) rotate(-90)" textLength="124" lengthAdjust="spacingAndGlyphs">R14</text><text transform="translate(2713 846) rotate(-90)" textLength="126" lengthAdjust="spacingAndGlyphs">R12</text><text transform="translate(3010 292) rotate(-90)" textLength="182" lengthAdjust="spacingAndGlyphs">PLED</text>
       <text class="big" transform="translate(1938 656) rotate(-90)" textLength="342" lengthAdjust="spacingAndGlyphs">PBTN2</text>
      </g>
      <text class="nine" x="736" y="525">9</text>
      <g stroke="#fff" stroke-width="2.500"><circle cx="88" cy="940" r="60"/><path d="M28 880L148 1000M148 880L28 1000"/></g>
     </g>
    </svg>
    <div class="active"><svg><use href="#i-flt"/></svg><svg><use href="#i-mag"/></svg><div><svg><use href="#i-move"/></svg></div><div><svg><use href="#i-sel"/></svg></div><div class="end"><svg><use href="#i-bars"/></svg></div><div><svg><use href="#i-chip"/></svg></div><div><svg><use href="#i-route"/></svg></div><div><svg><use href="#i-wave"/></svg></div><div><svg><use href="#i-via"/></svg></div><div><svg><use href="#i-poly"/></svg></div><div><svg><use href="#i-ko"/></svg></div><div><svg><use href="#i-dim"/></svg></div><div><svg><use href="#i-A"/></svg></div><div><svg><use href="#i-line"/></svg></div></div>
   </div>
   <div class="layers">
    <div class="ls"><i class="c-red"></i><span>LS</span></div>
    <div class="nav"><span class="off"><svg class="flip"><use href="#i-col"/></svg></span><span><svg><use href="#i-col"/></svg></span></div>
    <div class="lt w1 on"><i class="c-red"></i>[1] Top Layer</div><div class="lt w2"><i class="c-blue"></i>[2] Bottom Layer</div><div class="lt w3"><i class="c-mag"></i>Mechanical 1</div><div class="lt w4"><i class="c-mag"></i>Mechanical 13</div><div class="lt w4"><i class="c-green"></i>Mechanical 15</div><div class="lt w5"><i class="c-yel"></i>Top Overlay</div><div class="lt w6"><i class="c-olive"></i>Bottom Overlay</div><div class="lt w7"><i class="c-gray"></i>Top Paste</div><div class="lt w8"><i class="c-maroon"></i>Bottom</div>
   </div>
  </section>
  <aside class="right">
   <div class="panel">
    <div class="phead"><b>Properties</b><svg><use href="#i-dn"/></svg><svg class="pin"><use href="#i-pin"/></svg><svg><use href="#i-x"/></svg></div>
    <div class="scope"><span>Board</span><span class="what">Components (and 12 more)</span><div class="fbtn"><span><svg><use href="#i-fltw"/></svg></span><em><svg class="dn"><use href="#i-dn"/></svg></em></div></div>
    <div class="field psearch"><svg><use href="#i-search"/></svg>Search</div>
    <div class="ptabs"><span class="on g">General</span><span class="p">Parameters</span><span class="h">Health Check <svg><use href="#i-chk"/></svg></span></div>
    <div class="scroll">
     <div class="cont">
      <h3><svg><use href="#i-exp"/></svg>Selection Filter</h3>
      <div class="box filt">
       <div><button class="all">All - On</button></div>
       <div><button class="b" style="width:101px">Components</button><button class="b" style="width:85px">3D Bodies</button></div>
       <div><button class="b" style="width:79px">Keepouts</button><button class="b" style="width:60px">Tracks</button><button class="b" style="width:48px">Arcs</button><button class="b" style="width:52px">Pads</button></div>
       <div><button class="b" style="width:47px">Vias</button><button class="b" style="width:71px">Regions</button><button class="b" style="width:77px">Polygons</button><button class="b" style="width:45px">Fills</button></div>
       <div><button class="b" style="width:52px">Texts</button><button class="b" style="width:65px">Rooms</button><button class="b" style="width:58px">Other</button></div>
      </div>
      <h3 class="h2"><svg><use href="#i-exp"/></svg>Snap Options</h3>
      <div class="box snap">
       <div class="r"><button class="b" style="width:54px">Grids</button><button style="width:65px">Guides</button><button style="width:51px">Axes</button></div>
       <div class="lab"><b>Snapping</b><span>Shift+E</span></div>
       <div class="seg"><span>All Layers</span><span class="on">Current Layer</span><span>Off</span></div>
       <div class="lab lab2"><b>Objects for snapping</b></div>
       <div class="tbl">
        <div class="th"><span>On/Off</span><span>Objects</span></div>
        <div class="tb"><div class="rows">
         <div class="tr on"><i><svg><use href="#i-chk"/></svg></i>Track/Arcs Vertices</div><div class="tr"><i></i>Track/Arcs Lines</div><div class="tr"><i><svg><use href="#i-chk"/></svg></i>Arc Centers</div><div class="tr"><i><svg><use href="#i-chk"/></svg></i>Intersections</div><div class="tr"><i><svg><use href="#i-chk"/></svg></i>Pad Centers</div><div class="tr"><i></i>Pad Vertices</div><div class="tr"><i></i>Pad Edges</div><div class="tr"><i><svg><use href="#i-chk"/></svg></i>Via Centers</div><div class="tr"><i><svg><use href="#i-chk"/></svg></i>Regions/Polygons/Fills</div><div class="tr"><i></i>Board Shape</div>
        </div><div class="sb"><i class="up"></i><i class="th2"></i></div></div>
       </div>
      </div>
     </div>
     <div class="osb"><i class="up"></i><i class="thumb"></i><i class="down"></i></div>
    </div>
    <div class="nosel">Nothing selected</div>
   </div>
   <div class="btabs"><div class="nav"><span><svg class="flip"><use href="#i-col"/></svg></span><span class="off"><svg><use href="#i-col"/></svg></span></div><span class="bt cm">Comments</span><span class="bt pr">Properties</span></div>
  </aside>
 </main>
 <footer class="status"><div class="s1"><span>X:-7.62mm Y:9.271mm</span><span>Grid: 0.127mm</span><span>(Hotspot Snap)</span></div><div class="s2"></div><button>Panels</button></footer>
</div>
</body>
</html>
```
FILE: styles.css
```css
* { box-sizing: border-box; }
body { margin: 0; width: 1920px; height: 1020px; overflow: hidden; background: #343434; color: #e4e4e4; font: 14px/20px "Noto Sans", "Open Sans", sans-serif; letter-spacing: -0.35px; white-space: nowrap; }
svg { display: block; width: 16px; height: 16px; flex: none; }
.sprite { position: absolute; width: 0; height: 0; }
b { color: #fff; letter-spacing: -0.55px; }
.app { display: flex; flex-direction: column; height: 1020px; }
.sep { width: 1px; background: #2a2a2a; flex: none; }
.dn { width: 8px; height: 8px; }

.title { height: 29px; display: flex; justify-content: space-between; background: linear-gradient(#525252, #4b4b4b); border-bottom: 1px solid #333; }
.quick { display: flex; align-items: center; padding-left: 5px; gap: 12px; }
.quick .logo { width: 18px; height: 24px; }
.caption { width: 400px; margin-left: 525px; margin-right: auto; padding-top: 5px; letter-spacing: 0.03px; color: #f2f2f2; }
.winctl { display: flex; align-items: center; }
.field { display: flex; align-items: center; background: #2d2d2d; border: 1px solid #222; border-radius: 4px; color: #e8e8e8; }
.tsearch { width: 150px; height: 24px; align-self: flex-start; padding-left: 6px; gap: 3px; letter-spacing: -0.75px; }
.tsearch svg { width: 14px; }
.min { width: 8px; height: 2px; background: #fff; margin: 7px 0 0 25px; }
.restore { width: 12px; height: 12px; margin: 0 18px 0 37px; }
.close { width: 46px; height: 28px; background: #a00000; display: flex; align-items: center; justify-content: center; }
.close svg { width: 10px; height: 10px; }

.menu { height: 30px; background: #404040; display: flex; align-items: center; padding-left: 10px; font-size: 14.5px; }
.items { display: flex; gap: 16px; width: 592px; letter-spacing: -0.45px; justify-content: space-between; padding-right: 12px; }
.items u { text-underline-offset: 2px; text-decoration-thickness: 1px; }
.acct { display: flex; align-items: center; margin-left: auto; padding-right: 7px; font-size: 14.500px; letter-spacing: -0.5px; }
.btn { height: 21px; border: 1px solid #282828; border-radius: 3px; background: #515151; display: flex; align-items: center; justify-content: center; }
.cmt { width: 37px; margin-right: 6px; }
.share { width: 73px; gap: 5px; margin-right: 7px; }
.share svg { width: 12px; height: 12px; }
.acct .sep { height: 18px; }
.acct > svg { width: 14px; height: 14px; margin-left: 7px; }
.acct > svg + svg { margin-left: 9px; }
.acct > svg + .sep { margin-left: 7px; }
.nc { width: 100px; margin: 0 6px 0 5px; }
.acct > .user { margin-left: 9px; }
.acct > .user + .dn { width: 8px; height: 8px; margin-left: 4px; }

.tools { height: 30px; background: #404040; display: flex; align-items: center; padding-left: 3px; }
.tools > svg { margin: 0 3.5px; }
.tools > .sep { height: 16px; margin: 0 1.9px; }
.grip { width: 3px; height: 20px; margin-right: 1.5px; background: repeating-linear-gradient(#9a9a9a 0 1px, #404040 1px 3px); }
.g2 { margin: 0 2px 0 5px; }
.view { width: 131px; margin-left: 5px; letter-spacing: 0.1px; }
.drop { width: 16px; height: 24px; border: 1px solid #6484a4; display: flex; align-items: center; justify-content: center; }
.rtools { display: flex; align-items: center; margin-left: auto; padding-right: 2px; }
.rtools div { width: 40px; display: flex; align-items: center; gap: 7px; padding-left: 4px; }

.work { height: 901px; display: flex; padding-top: 3px; gap: 0; }
.panel { background: #404040; }
.left { width: 390px; margin: 0 4px 3px 3px; display: flex; flex-direction: column; }
.phead { height: 30px; background: linear-gradient(#505050, #4b4b4b); display: flex; align-items: center; padding: 0 9px 0 6px; border-bottom: 1px solid #383838; flex: none; }
.phead b { margin-right: auto; }
.phead svg { width: 8px; height: 8px; margin-left: 11px; }
.phead .pin { width: 11px; height: 12px; }
.ptools { height: 42px; display: flex; align-items: center; padding: 7px 0 0 18px; gap: 16px; }
.ptools .sep { height: 16px; margin: 0 -7px 0 -6px; }
.ptools svg { padding: .5px; }
.tree { border: 1px solid #272727; background: #3b3b3b; margin: 0 10px 10px 10px; flex: 1; padding: 5px 6px 0 8px; }
.tree .field { width: 352px; height: 27px; padding-left: 5px; gap: 5px; }
.tree hr { border: 0; border-top: 1px solid #262626; margin: 6px 0 13px; width: 352px; }
.row { height: 22px; display: flex; align-items: center; color: #dadada; letter-spacing: -0.35px; }
.row b { letter-spacing: -0.2px; }
.l0 svg { margin-left: -2px; }
.l0 b { padding-left: 3px; }
.l1 { padding-left: 1px; }
.ar { width: 6px; height: 6px; margin-right: 6px; }
.ar.c { width: 5px; height: 8px; margin: 0 5px 0 1px; }
.cur { flex: 1; border: 1px solid #6484a4; background: #4b4b4b; height: 22px; line-height: 20px; padding-left: 2px; }
.l2 { padding-left: 17px; }
.l2 .ar { margin-left: -1px; margin-right: 7px; }
.l2 .ar.c { margin-left: 0; margin-right: 7px; }
.l2 .f { width: 15px; height: 14px; }
.l2 span { margin-left: 1px; padding-left: 2px; flex: 1; border-bottom: 1px solid #343434; height: 22px; line-height: 23px; }
.l3 { padding-left: 43px; }
.l3 span { padding-left: 3px; flex: 1; height: 22px; line-height: 23px; border-bottom: 1px solid #343434; }
.l3 .fl { width: 14px; height: 14px; margin-left: -42px; margin-right: 28px; }
.l3.on span { background: #6484a4; color: #fff; }

.center { width: 1188px; margin-right: 3px; display: flex; flex-direction: column; }
.dtabs { height: 31px; display: flex; letter-spacing: -0.48px; }
.dtabs div { display: flex; align-items: center; gap: 5px; padding-left: 5px; height: 30px; }
.dtabs .t1 { width: 141px; gap: 4px; }
.dtabs .t2 { width: 109px; background: #585858; border: 1px solid #222; border-bottom: 0; border-radius: 3px 3px 0 0; padding-left: 3px; gap: 4px; letter-spacing: -0.75px; }
.dtabs .t3 { padding-left: 6px; letter-spacing: -0.4px; }
.canvas { height: 837px; background: #6e6a68; position: relative; }
.board { width: 1188px; height: 837px; }
.des text { fill: #ff0; font: 71px "Liberation Sans", Arial, sans-serif; letter-spacing: 0; stroke: #ff0; stroke-width: 2.2; stroke-linejoin: round; }
.des .big { font-size: 106px; stroke: none; }
.nine { fill: #ffb0c4; font: bold 50px "Liberation Sans", sans-serif; }
.active { position: absolute; left: 364px; top: 4px; width: 459px; height: 32px; background: #404040; border-radius: 4px; display: flex; padding-left: 5px; }
.active > * { width: 32px; height: 32px; padding: 8px; flex: none; position: relative; }
.active div::after { content: ""; position: absolute; right: 0; bottom: 1px; border: 2.500px solid transparent; border-right-color: #fff; border-bottom-color: #fff; }
.active .end { border-right: 1px solid #282828; }
.layers { height: 27px; display: flex; overflow: hidden; }
.layers > * { flex: none; }
.layers i { height: 13px; width: 13px; border: 1px solid #b9b9b9; flex: none; }
.ls { margin: 3px 6px 0 4px; width: 56px; height: 18px; display: flex; border: 1px solid #222; border-radius: 2px; }
.ls .c-red { width: 31px; height: 16px; border: 0; }
.ls span { flex: 1; background: #505050; border-left: 1px solid #222; line-height: 17px; padding-left: 4px; letter-spacing: -0.7px; }
.nav { width: 51px; height: 26px; margin-top: 1px; border: 1px solid #262626; border-radius: 3px; background: #525252; display: flex; }
.nav span { flex: 1; display: flex; align-items: center; justify-content: center; }
.nav span + span { border-left: 1px solid #222; }
.nav svg { width: 7px; height: 11px; }
.nav .off svg { opacity: .35; }
.flip { transform: scaleX(-1); }
.lt { border-right: 1px solid #222; border-bottom: 1px solid #222; border-radius: 0 0 3px 3px; height: 27px; display: flex; align-items: center; gap: 10px; padding: 1px 0 0 9px; background: #363636; letter-spacing: -0.6px; color: #ddd; }
.layers .nav { margin-right: 3px; }
.lt.on { background: #4c4c4c; color: #fff; font-weight: bold; letter-spacing: -0.1px; border-left: 1px solid #222; padding-left: 8px; }
.w1 { width: 128px; } .w2 { width: 142px; } .w3 { width: 119px; } .w4 { width: 127px; } .w5 { width: 113px; } .w6 { width: 136px; } .w7 { width: 99px; } .w8 { width: 77px; }
.c-red { background: #f00; } .c-blue { background: #00f; } .c-mag { background: #f0f; } .c-green { background: #008000; } .c-yel { background: #ff0; } .c-olive { background: #808000; } .c-gray { background: #808080; } .c-maroon { background: #800000; }
.w8 { border-right: 0; border-radius: 0; }
.w2 { letter-spacing: -0.5px; }

.right { width: 329px; }
.right .panel { height: 867px; display: flex; flex-direction: column; }
.scope { display: flex; align-items: center; height: 50px; padding: 0 10px; letter-spacing: -0.4px; }
.what { margin-left: auto; margin-right: 6px; }
.fbtn { width: 55px; height: 32px; border: 1px solid #222; border-radius: 4px; background: #6484a4; display: flex; overflow: hidden; }
.fbtn span { width: 35px; padding: 8px 10px; }
.fbtn em { flex: 1; background: #515151; border-left: 1px solid #222; display: flex; align-items: center; justify-content: center; }
.fbtn em svg { width: 10px; height: 8px; }
.psearch { margin: 3px 10px 0; height: 28px; padding-left: 9px; gap: 9px; flex: none; }
.psearch svg, .tree .field svg { width: 14px; height: 14px; }
.ptabs { margin: 17px 13px 0 10px; height: 26px; padding-left: 11px; display: flex; border-bottom: 1px solid #222; flex: none; letter-spacing: -0.45px; }
.ptabs span { border: 1px solid #262626; border-bottom: 0; background: #363636; border-radius: 4px 4px 0 0; display: flex; align-items: center; justify-content: center; gap: 7px; padding: 2px 0 0 1px; }
.ptabs .on { background: #505050; }
.g { width: 64px; } .p { width: 86px; } .h { width: 116px; }
.ptabs svg { width: 12px; height: 12px; }
.scroll { height: 684px; display: flex; overflow: hidden; }
.cont { width: 289px; margin-left: 10px; }
h3 { margin: 0; font-size: 14px; height: 37px; padding-top: 11px; display: flex; align-items: center; padding-bottom: 5px; color: #fff; gap: 5px; letter-spacing: -0.3px; }
h3 svg { width: 6px; height: 6px; }
.h2 { height: 44px; padding-top: 18px; padding-bottom: 5px; }
.box { background: #484848; border-radius: 3px; padding: 8px; }
.filt { height: 194px; display: flex; flex-direction: column; gap: 5.2px; }
.filt div, .snap .r { display: flex; gap: 5px; }
button { font: inherit; letter-spacing: -0.4px; height: 31px; padding: 1px 0 0; border: 1px solid #262626; border-radius: 3px; background: #515151; color: #ececec; white-space: nowrap; }
button.b { background: #6484a4; color: #f2f6fa; }
.all { width: 90px; }
.snap { height: 420px; }
.lab { display: flex; justify-content: space-between; height: 31px; align-items: center; padding: 2px 3px 0 0; font-size: 13.500px; }
.lab b { letter-spacing: -0.5px; }
.lab span { color: #8c8c8c; }
.seg { display: flex; width: 274px; height: 29px; border: 1px solid #222; border-radius: 3px; background: #515151; letter-spacing: -0.4px; }
.seg span { flex: 1; display: flex; align-items: center; justify-content: center; padding-top: 1px; }
.seg .on { background: #6484a4; color: #fff; border: solid #222; border-width: 0 1px; letter-spacing: -0.6px; }
.lab2 { height: 30px; padding-top: 0; }
.tbl { width: 274px; margin-left: -1px; margin-top: 1px; border: 1px solid #222; border-top-width: 2px; background: #383838; }
.th { height: 25px; background: #484848; border-bottom: 1px solid #222; display: flex; padding: 3px 18px 3px 10px; }
.th span { border-right: 1px solid #222; width: 52px; line-height: 18px; }
.th span + span { flex: 1; padding-left: 8px; }
.tb { display: flex; }
.rows { width: 254px; }
.tr { height: 26px; display: flex; align-items: center; gap: 33px; padding-left: 19px; color: #dadada; border-bottom: 2px solid #343434; letter-spacing: -0.42px; line-height: 22px; }
.tr.on { background: #6484a4; color: #f4f4f4; }
.tr i { width: 20px; height: 20px; border: 1px solid #222; border-radius: 4px; background: #515151; padding: 3px; }
.tr i svg { width: 12px; height: 12px; }
.sb { flex: 1; background: #3f3f3f; display: flex; flex-direction: column; align-items: center; padding-top: 7px; }
.up { border: 4px solid transparent; border-top: 0; border-bottom: 5px solid #999; }
.down { border: 4px solid transparent; border-bottom: 0; border-top: 5px solid #999; }
.th2 { width: 8px; margin-top: 8px; border-radius: 4px 4px 0 0; background: #888; flex: 1; }
.osb { width: 16px; display: flex; flex-direction: column; align-items: center; padding: 10px 0 9px; margin-left: 1px; }
.osb .thumb { width: 8px; height: 176px; margin-top: 7px; border-radius: 4px; background: #888; }
.osb .down { margin-top: auto; }
.nosel { padding: 11px 0 0 4px; letter-spacing: -0.25px; }
.btabs { display: flex; height: 28px; }
.btabs .nav { margin: 1px 3px 0 0; height: 25px; }
.bt { height: 26px; border: 1px solid #222; border-top: 0; border-radius: 0 0 3px 3px; background: #363636; display: flex; align-items: center; justify-content: center; letter-spacing: -0.4px; padding-top: 1px; }
.cm { width: 85px; } .pr { width: 79px; background: #505050; }

.status { height: 29px; background: #404040; display: flex; align-items: center; box-shadow: 0 1px #f4f4f4; }
.s1 { width: 488px; height: 23px; border-right: 1px solid #333; display: flex; padding: 2px 0 0 6px; gap: 17px; letter-spacing: -0.42px; }
.s1 span:last-child { margin-left: 11px; }
.s2 { width: 487px; height: 23px; border-right: 1px solid #333; }
.status button { margin-left: auto; margin-right: 4px; width: 51px; height: 23px; margin-top: 3px; }
```
